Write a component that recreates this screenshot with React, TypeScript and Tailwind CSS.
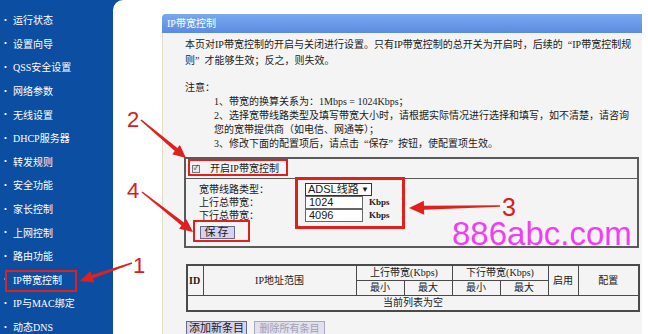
import React from 'react';

const menu = [
  '运行状态',
  '设置向导',
  'QSS安全设置',
  '网络参数',
  '无线设置',
  'DHCP服务器',
  '转发规则',
  '安全功能',
  '家长控制',
  '上网控制',
  '路由功能',
  'IP带宽控制',
  'IP与MAC绑定',
  '动态DNS',
];

// red annotation arrow, thin at the tail and wide at the head
function arrowPoints(x1: number, y1: number, x2: number, y2: number, head = 13, hw = 6) {
  const len = Math.hypot(x2 - x1, y2 - y1);
  const dx = (x2 - x1) / len;
  const dy = (y2 - y1) / len;
  const nx = -dy;
  const ny = dx;
  const bx = x2 - dx * head;
  const by = y2 - dy * head;
  const pts = [
    [x1 + nx * 0.7, y1 + ny * 0.7],
    [bx + nx * 2, by + ny * 2],
    [bx + nx * hw, by + ny * hw],
    [x2, y2],
    [bx - nx * hw, by - ny * hw],
    [bx - nx * 2, by - ny * 2],
    [x1 - nx * 0.7, y1 - ny * 0.7],
  ];
  return pts.map(p => p.map(v => v.toFixed(1)).join(',')).join(' ');
}

// quotes padded out to a full-width cell, same font so the line box stays put
const LQ = () => <span className="ml-[5px]">“</span>;
const RQ = () => <span className="mr-[5px]">”</span>;

export default function App() {
  return (
    <div className="relative flex w-[648px] h-[334px] overflow-hidden bg-white text-[10px] text-[#1a1a1a] font-['Liberation_Serif','Noto_Sans_CJK_SC',serif]">
      {/* sidebar */}
      <nav className="w-[113px] shrink-0 bg-[#0c4ea2] pt-[9px]">
        {menu.map(item => (
          <div key={item} className="flex items-center h-[23.6px] pl-[4px] text-white">
            <span className="w-[9px] text-[8px] leading-none">•</span>
            <span className="whitespace-nowrap">{item}</span>
          </div>
        ))}
      </nav>

      {/* main frame */}
      <div className="relative flex-1">
        <div className="absolute left-0 top-0 w-[12px] h-[12px] bg-[#0c4ea2]" />
        <div className="relative h-full bg-white rounded-tl-[10px] pl-[49px] pt-[14px] pr-[7px] flex flex-col">
          <div className="h-[19px] shrink-0 rounded-tl-[4px] bg-gradient-to-b from-[#7aa8f0] to-[#5b8be0] text-white pl-[5px] flex items-center">
            IP带宽控制
          </div>

          <div className="flex-1 bg-[#f4f4f4] border-l border-[#e6dcc3] pl-[22px] pr-[2px]">
            <div className="mt-[4px] leading-[16px] whitespace-nowrap">
              <div>本页对IP带宽控制的开启与关闭进行设置。只有IP带宽控制的总开关为开启时，后续的<LQ />IP带宽控制规</div>
              <div>则<RQ />才能够生效；反之，则失效。</div>
            </div>

            <div className="mt-[12px] leading-[14px] whitespace-nowrap">
              <div>注意：</div>
              <div className="pl-[29px]">
                <div>1、带宽的换算关系为：1Mbps = 1024Kbps；</div>
                <div>2、选择宽带线路类型及填写带宽大小时，请根据实际情况进行选择和填写，如不清楚，请咨询</div>
                <div>您的宽带提供商（如电信、网通等）；</div>
                <div>3、修改下面的配置项后，请点击<LQ />保存<RQ />按钮，使配置项生效。</div>
              </div>
            </div>

            {/* settings box */}
            <div className="mt-[6px] -ml-[1px] w-[455px] h-[91px] border-2 border-[#5a5a5a]">
              <div className="h-[20px] border-b border-[#5a5a5a] flex items-center pl-[6px]">
                <span className="w-[8px] h-[8px] border border-[#777] bg-[#e8e8e8] flex items-center justify-center text-[7px] leading-none text-[#333]">✓</span>
                <span className="ml-[10px]">开启IP带宽控制</span>
              </div>
              <div className="pt-[4px] pl-[13px]">
                <div className="flex items-center h-[13px]">
                  <span className="w-[106px]">宽带线路类型：</span>
                  <div className="w-[67px] h-[13px] border border-[#333] bg-white flex items-center justify-between px-[2px] font-['Liberation_Sans','Noto_Sans_CJK_SC',sans-serif] text-[11px] leading-none">
                    <span>ADSL线路</span>
                    <span className="text-[8px]">▼</span>
                  </div>
                </div>
                <div className="flex items-center h-[13px]">
                  <span className="w-[106px]">上行总带宽：</span>
                  <div className="w-[58px] h-[13px] border border-[#666] bg-white pl-[3px] flex items-center font-['Liberation_Sans',sans-serif] text-[11px] leading-none">1024</div>
                  <span className="ml-[6px] text-[9px] font-bold">Kbps</span>
                </div>
                <div className="flex items-center h-[13px]">
                  <span className="w-[106px]">下行总带宽：</span>
                  <div className="w-[58px] h-[13px] border border-[#666] bg-white pl-[3px] flex items-center font-['Liberation_Sans',sans-serif] text-[11px] leading-none">4096</div>
                  <span className="ml-[6px] text-[9px] font-bold">Kbps</span>
                </div>
                <button className="mt-[4px] ml-[1px] w-[35px] h-[13px] bg-[#d6d3ef] border border-[#6a6a8a] text-[11px] leading-none tracking-[2px] flex items-center justify-center">
                  保存
                </button>
              </div>
            </div>

            {/* rules table */}
            <table className="mt-[16px] ml-[1px] w-[452px] border-collapse border-2 border-[#4a4a4a] table-fixed text-center">
              <colgroup>
                <col className="w-[16px]" />
                <col className="w-[153px]" />
                <col className="w-[48px]" />
                <col className="w-[48px]" />
                <col className="w-[48px]" />
                <col className="w-[48px]" />
                <col className="w-[30px]" />
                <col className="w-[61px]" />
              </colgroup>
              <tbody>
                <tr className="h-[15px]">
                  <td rowSpan={2} className="border border-[#4a4a4a] p-0 text-left pl-[1px] font-bold">ID</td>
                  <td rowSpan={2} className="border border-[#4a4a4a] p-0">IP地址范围</td>
                  <td colSpan={2} className="border border-[#4a4a4a] p-0 leading-none">上行带宽(Kbps)</td>
                  <td colSpan={2} className="border border-[#4a4a4a] p-0 leading-none">下行带宽(Kbps)</td>
                  <td rowSpan={2} className="border border-[#4a4a4a] p-0">启用</td>
                  <td rowSpan={2} className="border border-[#4a4a4a] p-0">配置</td>
                </tr>
                <tr className="h-[15px]">
                  <td className="border border-[#4a4a4a] p-0 leading-none">最小</td>
                  <td className="border border-[#4a4a4a] p-0 leading-none">最大</td>
                  <td className="border border-[#4a4a4a] p-0 leading-none">最小</td>
                  <td className="border border-[#4a4a4a] p-0 leading-none">最大</td>
                </tr>
                <tr className="h-[16px]">
                  <td colSpan={8} className="border border-[#4a4a4a] p-0 leading-none">当前列表为空</td>
                </tr>
              </tbody>
            </table>

            <div className="mt-[9px] ml-[1px] flex gap-[7px]">
              <button className="w-[61px] h-[15px] bg-[#d6d3ef] border border-[#6a6a8a] text-[11px] leading-none flex items-center justify-center">添加新条目</button>
              <button className="w-[71px] h-[15px] bg-[#e2e0ee] border border-[#a8a8c0] text-[10px] leading-none text-[#a0a0b4] flex items-center justify-center">删除所有条目</button>
            </div>
          </div>
        </div>
      </div>

      {/* annotations */}
      <div className="absolute left-[5px] top-[270px] w-[72px] h-[22px] border-2 border-[#e0201c]" />
      <div className="absolute left-[188px] top-[159px] w-[100px] h-[17px] border-2 border-[#e0201c]" />
      <div className="absolute left-[295px] top-[177px] w-[110px] h-[52px] border-[3px] border-[#e0201c]" />
      <div className="absolute left-[193px] top-[220px] w-[57px] h-[22px] border-2 border-[#e0201c]" />

      <svg className="absolute inset-0 pointer-events-none" width="648" height="334">
        <polygon points={arrowPoints(132, 263, 80, 281)} fill="#e0201c" />
        <polygon points={arrowPoints(141, 120, 186, 158)} fill="#e0201c" />
        <polygon points={arrowPoints(142, 192, 193, 232)} fill="#e0201c" />
        <polygon points={arrowPoints(500, 206, 409, 208, 15, 7)} fill="#e0201c" />
      </svg>

      <span className="absolute left-[127px] top-[109px] text-[22px] leading-none text-[#d42020] font-['Liberation_Sans',sans-serif]">2</span>
      <span className="absolute left-[127px] top-[180px] text-[22px] leading-none text-[#d42020] font-['Liberation_Sans',sans-serif]">4</span>
      <span className="absolute left-[133px] top-[255px] text-[22px] leading-none text-[#d42020] font-['Liberation_Sans',sans-serif]">1</span>
      <span className="absolute left-[502px] top-[196px] text-[25px] leading-[22px] text-[#d42020] font-['Liberation_Sans',sans-serif]">3</span>

      <span className="absolute left-[452px] top-[222px] text-[33px] leading-[24px] text-[#f23ef2] font-['Liberation_Sans',sans-serif]">886abc.com</span>
    </div>
  );
}
